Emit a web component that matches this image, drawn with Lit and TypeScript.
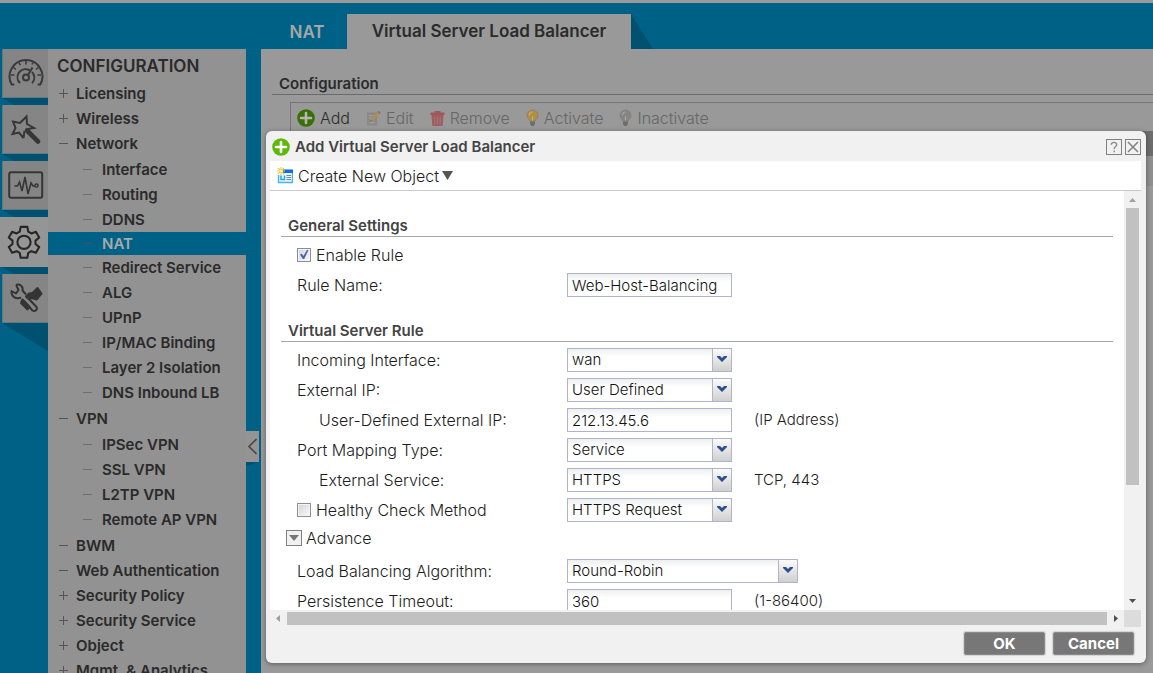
import { LitElement, html, css, svg, nothing, type TemplateResult } from "lit";
import { customElement, property, state } from "lit/decorators.js";
import { classMap } from "lit/directives/class-map.js";

interface NavItem {
  label: string;
  mark: "+" | "-";
  children?: string[];
}

const NAV: NavItem[] = [
  { label: "Licensing", mark: "+" },
  { label: "Wireless", mark: "+" },
  {
    label: "Network",
    mark: "-",
    children: [
      "Interface",
      "Routing",
      "DDNS",
      "NAT",
      "Redirect Service",
      "ALG",
      "UPnP",
      "IP/MAC Binding",
      "Layer 2 Isolation",
      "DNS Inbound LB",
    ],
  },
  { label: "VPN", mark: "-", children: ["IPSec VPN", "SSL VPN", "L2TP VPN", "Remote AP VPN"] },
  { label: "BWM", mark: "-" },
  { label: "Web Authentication", mark: "-" },
  { label: "Security Policy", mark: "+" },
  { label: "Security Service", mark: "+" },
  { label: "Object", mark: "+" },
  { label: "Mgmt. & Analytics", mark: "+" },
];

const addIcon = (size: number, fill: string, stroke: string) => svg`
  <svg width=${size} height=${size} viewBox="0 0 18 18" aria-hidden="true">
    <circle cx="9" cy="9" r="8.8" fill=${fill} />
    <path d="M9 4v10M4 9h10" stroke=${stroke} stroke-width="2.6" stroke-linecap="round" />
  </svg>`;

const editIcon = svg`
  <svg width="15" height="17" viewBox="0 0 16 17" aria-hidden="true">
    <path d="M1 2h11v14H1z" fill="#898989" />
    <path d="M3 5.500h5M3 8h3M3 13h7" stroke="#a4a4a4" />
    <path d="M4.500 11.500l.8-3 7-7 2.400 2.200-7.200 7z" fill="#ae8f50" />
    <path d="M12.300 1.500l1.200-1 2.200 2-1 1.200z" fill="#9a6266" />
    <path d="M4.500 11.500l.5-1.800 1.300 1.200z" fill="#6a5a40" />
  </svg>`;

const trashIcon = svg`
  <svg width="15" height="17" viewBox="0 0 15 17" aria-hidden="true">
    <path d="M.500 2.500h4V1h6v1.500h4V5H.500z" fill="#a0585c" />
    <path d="M1.500 5h12l-.8 11H2.300z" fill="#9f5d61" />
    <path d="M4.800 6.500v8M7.500 6.500v8M10.200 6.500v8" stroke="#ad7477" stroke-width="1" />
  </svg>`;

const bulbIcon = (fill: string, shine: string) => svg`
  <svg width="13" height="18" viewBox="0 0 13 17" aria-hidden="true">
    <path d="M6.500.5a5.500 5.500 0 0 1 5.500 5.500c0 2.500-2.300 3.500-2.800 5.500H3.800C3.300 9.500 1 8.500 1 6A5.500 5.500 0 0 1 6.500.500z" fill=${fill} stroke="#80776a" stroke-width=".6" />
    <path d="M3.500 5.500a3 3 0 0 1 3-3M6.500 7v4" stroke=${shine} fill="none" stroke-width="1.200" />
    <path d="M4 12h5v2.500l-1.200 2H5.200L4 14.500z" fill="#6d6d6d" />
  </svg>`;

const objectIcon = svg`
  <svg width="16" height="17" viewBox="0 0 16 17" aria-hidden="true">
    <path d="M6 2h9.500v13.500H1V8h5z" fill="#e8f4ff" />
    <path d="M6 2.500h10V6H6z" fill="#0f6fe0" />
    <path d="M1.500 8v7.500h14V6" fill="none" stroke="#45b4ec" stroke-width="1.400" />
    <path d="M4 8.500v4h3.500v-4" fill="none" stroke="#2ba2e6" stroke-width="1.500" />
    <path d="M9.500 8.500h4.500M9.500 10.500h4.500M9.500 12.500h4.500" stroke="#6f87a8" />
    <path d="M4 0v8M0 4h8M1 1l6 6M7 1L1 7" stroke="#f4c63d" stroke-width="1.100" />
    <circle cx="4" cy="4" r="1.600" fill="#fff3b0" />
  </svg>`;

const gaugeIcon = svg`
  <svg width="36" height="30" viewBox="0 0 36 30" fill="none" stroke="#3a3a3a" stroke-width="2" aria-hidden="true">
    <path d="M5.500 26.500H3.700A16.400 16.400 0 1 1 32.300 26.500H30.500" stroke-linecap="round" />
    <path d="M11.500 24.500a8 8 0 0 1 9.500-12.500M24.500 14.500a8 8 0 0 1 0 10" stroke-linecap="round" />
    <circle cx="18" cy="19.500" r="3" />
    <path d="M20 17l4.500-7.500" />
    <path d="M18 3v3.500M11 4.500l1.300 2.800M25 4.500l-1 2M5.500 9.500l2.500 2M30.500 9.500l-2.500 2M3 17h3.500M33 17h-3.500" stroke-width="1.500" />
  </svg>`;

const wandIcon = svg`
  <svg width="32" height="32" viewBox="0 0 32 32" fill="none" stroke="#363636" stroke-width="2" aria-hidden="true">
    <path d="M13.500 25l-4.500-5.500-6.500 1.500 3-6L3 8.500l7 1.500 6.500-6.500.5 7.500 7 4-6 1M13.500 25l1-7" stroke-linejoin="miter" />
    <path d="M17 17.500L28 28.500" stroke-width="4.600" stroke-linecap="round" />
  </svg>`;

const monitorIcon = svg`
  <svg width="36" height="28" viewBox="0 0 36 28" fill="none" stroke="#363636" aria-hidden="true">
    <rect x="1.200" y="1.200" width="33" height="25.500" rx="2" stroke-width="2" />
    <path d="M6.500 15h3l2-4 2.500 9L17 6l3 17 3-11 2 3h2" stroke-width="1.600" />
    <circle cx="28.500" cy="14.500" r="1.600" stroke-width="1.500" />
  </svg>`;

const gearIcon = svg`
  <svg width="34" height="34" viewBox="0 0 36 36" fill="none" stroke="#262626" stroke-width="2.200" stroke-linejoin="round" aria-hidden="true">
    <path d="M14.500 2h7l1 5 3.300 1.900 4.800-1.700 3.500 6-3.900 3.300v3.600l3.900 3.300-3.500 6-4.800-1.700-3.300 1.900-1 5h-7l-1-5-3.300-1.900-4.800 1.700-3.500-6 3.900-3.300v-3.600L1.900 13.200l3.500-6 4.800 1.700L13.500 7z" />
    <circle cx="18" cy="18.300" r="7" />
  </svg>`;

const toolsIcon = svg`
  <svg width="34" height="32" viewBox="0 0 34 32" fill="none" stroke="#343434" stroke-width="2" stroke-linejoin="round" aria-hidden="true">
    <path d="M7 3c4-1.500 7.500 1.500 6.500 5.500l3.500 4M12 15.500c-5 2-10-1-9.500-6.500l4.500 2.500 2.500-3.500L7 3" />
    <path d="M19 16l8.500 9c1.500 2.500-1.500 5-4 3.500L15 19" />
    <path d="M20 11.500l3.500-.5 5-5 4 5.500-5 6-4.500-1.500-4 .5-2-2z" fill="#343434" />
    <path d="M13.500 17.500l7 7.500-2 2.500-6.500-6.500z" fill="#343434" />
  </svg>`;

/** Expand marker in front of a navigation entry. */
const marker = (kind: "+" | "-") => svg`
  <svg class="mark" width="11" height="11" viewBox="0 0 11 11" aria-hidden="true">
    <path d=${kind === "+" ? "M1 5.500h9M5.500 1v9" : "M1 5.500h9"} stroke="currentColor" fill="none" />
  </svg>`;

/** Drop-down with the blue chevron button. */
@customElement("combo-box")
export class ComboBox extends LitElement {
  @property() value = "";
  @property() label = "";
  @property({ type: Array }) options: string[] = [];

  static styles = css`
    :host {
      display: block;
      position: relative;
      font-size: 15px;
    }
    select {
      display: block;
      width: 100%;
      height: 24px;
      box-sizing: border-box;
      margin: 0;
      padding: 0 20px 0 4px;
      border: 1px solid #b0b3ca;
      border-radius: 0;
      appearance: none;
      background: linear-gradient(#eceff0, #ffffff 8px);
      color: #111;
      font: inherit;
      outline: none;
    }
    .trigger {
      position: absolute;
      top: 0;
      right: 0;
      width: 20px;
      height: 24px;
      box-sizing: border-box;
      border: 1px solid #b0b3ca;
      border-top-right-radius: 2px;
      background: linear-gradient(#fbfbfb, #cfcfcf);
      display: grid;
      place-items: center;
      pointer-events: none;
    }
  `;

  render() {
    return html`
      <select aria-label=${this.label}>
        ${this.options.map((o) => html`<option ?selected=${o === this.value}>${o}</option>`)}
      </select>
      <span class="trigger">
        <svg width="10" height="8" viewBox="0 0 10 8" aria-hidden="true">
          <path d="M0 0h3l2 2 2-2h3v1L5 6 0 1z" fill="#2c4f92" />
        </svg>
      </span>
    `;
  }
}

@customElement("nav-tree")
export class NavTree extends LitElement {
  @state() private current = "NAT";

  static styles = css`
    :host {
      display: block;
      color: #2a2a2a;
      font-size: 15px;
      font-weight: 600;
    }
    h1 {
      margin: 0;
      padding: 3px 0 0 9px;
      font-size: 17px;
      line-height: 28px;
      font-weight: 600;
    }
    ul {
      margin: 0;
      padding: 0;
      list-style: none;
    }
    .tree {
      padding-top: 1px;
    }
    .sub {
      padding: 1px 0;
    }
    a {
      display: flex;
      align-items: center;
      gap: 7px;
      height: 25px;
      padding-left: 10px;
      color: inherit;
      text-decoration: none;
      white-space: nowrap;
    }
    .sub a {
      padding-left: 34px;
      gap: 9px;
    }
    .mark {
      flex: none;
      color: #555;
    }
    .sub .mark {
      color: #6e6e6e;
    }
    a.current {
      height: 23px;
      background: #006187;
      color: #a9a9a9;
    }
    a.current .mark {
      color: #30596a;
    }
  `;

  render() {
    return html`
      <h1>CONFIGURATION</h1>
      <ul class="tree">
        ${NAV.map(
          (item) => html`<li>
            <a href="#">${marker(item.mark)}${item.label}</a>
            ${item.children
              ? html`<ul class="sub">
                  ${item.children.map(
                    (c) => html`<li>
                      <a
                        href="#"
                        class=${classMap({ current: c === this.current })}
                        @click=${() => (this.current = c)}
                        >${marker("-")}${c}</a
                      >
                    </li>`
                  )}
                </ul>`
              : nothing}
          </li>`
        )}
      </ul>
    `;
  }
}

@customElement("server-dialog")
export class ServerDialog extends LitElement {
  @state() private enabled = true;
  @state() private healthCheck = false;

  static styles = css`
    :host {
      display: flex;
      flex-direction: column;
      box-sizing: border-box;
      padding: 0 5px 0 4px;
      border-radius: 6px;
      background: #f1f1f1;
      box-shadow: 0 1px 5px rgba(0, 0, 0, 0.4);
      color: #1c1c1c;
    }
    header {
      display: flex;
      align-items: center;
      gap: 5px;
      box-sizing: border-box;
      height: 30px;
      padding: 2px 0 0 2px;
    }
    h2 {
      flex: 1;
      margin: 0;
      font-size: 15px;
      font-weight: 600;
      color: #444;
    }
    .tools {
      display: flex;
      gap: 3px;
    }
    .tool,
    .fold {
      display: grid;
      place-items: center;
      width: 16px;
      height: 16px;
      padding: 0;
      border: 1px solid #808080;
      background: #f1f1f1;
    }
    .bar {
      display: flex;
      align-items: center;
      height: 29px;
      padding-left: 7px;
      background: #fff;
      border-bottom: 1px solid #c8c8c8;
    }
    .create {
      display: flex;
      align-items: center;
      gap: 5px;
      padding: 0;
      border: 0;
      background: none;
      color: inherit;
      font: inherit;
    }
    .create span {
      display: flex;
      align-items: center;
      gap: 3px;
    }
    .view {
      flex: 1;
      min-height: 0;
      display: grid;
      grid-template: minmax(0, 1fr) 17px / minmax(0, 1fr) 17px;
    }
    form {
      overflow: hidden;
      background: #fff;
      padding: 24px 11px 0;
    }
    h3 {
      margin: 0;
      padding-left: 7px;
      border-bottom: 1px solid #a6a6a6;
      font-size: 15px;
      line-height: 21px;
      font-weight: 600;
      color: #444;
    }
    .group {
      display: flex;
      flex-direction: column;
      padding: 3px 0 0 16px;
    }
    .first {
      margin-bottom: 20px;
    }
    .row {
      display: grid;
      grid-template-columns: 270px 165px auto;
      align-items: center;
      height: 30px;
      white-space: nowrap;
    }
    .wide {
      grid-template-columns: 270px 231px auto;
    }
    .nested {
      padding-left: 22px;
    }
    .note {
      padding-left: 22px;
      font-size: 15px;
    }
    .check {
      display: flex;
      align-items: center;
      gap: 5px;
    }
    .check input {
      appearance: none;
      display: grid;
      place-items: center;
      flex: none;
      width: 14px;
      height: 14px;
      margin: 0;
      border: 1px solid #8c8f92;
      background: linear-gradient(135deg, #d0d3d8, #fafafa);
      box-shadow: inset 0 0 0 1px #f4f4f4;
    }
    .box {
      position: relative;
      display: flex;
    }
    .tick {
      position: absolute;
      left: 2px;
      top: 1px;
      pointer-events: none;
    }
    .text {
      height: 24px;
      width: 100%;
      box-sizing: border-box;
      padding: 0 4px;
      border: 1px solid #b0b3ca;
      border-radius: 0;
      background: linear-gradient(#eceff0, #ffffff 8px);
      color: #111;
      font: inherit;
      font-size: 15px;
      outline: none;
    }
    .advance {
      display: flex;
      align-items: center;
      gap: 4px;
      height: 26px;
      padding-left: 5px;
    }
    .last {
      padding-top: 5px;
    }
    .vbar,
    .hbar {
      display: flex;
      align-items: center;
      background: #f1f1f1;
    }
    .vbar {
      flex-direction: column;
    }
    .arrow {
      flex: none;
      width: 17px;
      height: 17px;
    }
    .vthumb {
      flex: 277;
      width: 13px;
      background: #c1c1c1;
    }
    .vrest {
      flex: 108;
    }
    .hthumb {
      flex: 1;
      height: 13px;
      background: #c1c1c1;
    }
    .corner {
      background: #dcdcdc;
    }
    footer {
      display: flex;
      justify-content: flex-end;
      align-items: flex-start;
      gap: 8px;
      height: 31px;
      padding: 5px 7px 0 0;
    }
    .action {
      width: 81px;
      height: 23px;
      padding: 0;
      border: 1px solid #8a8a8a;
      border-radius: 2px;
      background: #777;
      color: #fff;
      font: inherit;
      font-size: 15px;
      font-weight: 700;
      box-shadow: 0 0 1px 1px #d2d2d2;
    }
  `;

  private combo(label: string, value: string, options: string[] = [value]): TemplateResult {
    return html`<combo-box .label=${label} .value=${value} .options=${options}></combo-box>`;
  }

  private check(label: string, on: boolean, change: (v: boolean) => void) {
    return html`<label class="check">
      <span class="box">
        <input
          type="checkbox"
          .checked=${on}
          @change=${(e: Event) => change((e.target as HTMLInputElement).checked)}
        />
        ${on
          ? html`<svg class="tick" width="10" height="11" viewBox="0 0 10 11" aria-hidden="true">
              <path d="M1 5.500l1.800-.8 1.600 2.300L8.200.800l1.300.2L5.200 10H3.800z" fill="#4664b0" />
            </svg>`
          : nothing}
      </span>
      ${label}
    </label>`;
  }

  render() {
    return html`
      <header>
        ${addIcon(18, "#5db906", "#fff")}
        <h2>Add Virtual Server Load Balancer</h2>
        <div class="tools">
          <button class="tool" aria-label="Help">
            <svg width="12" height="12" viewBox="0 0 12 12" fill="none" stroke="#8a8a8a" stroke-width="1.400">
              <path d="M3.300 3.800C3.300.6 8.800.6 8.700 3.700 8.600 5.500 6.200 5.600 6.200 8M6.200 9.600v1.600" />
            </svg>
          </button>
          <button class="tool" aria-label="Close">
            <svg width="12" height="12" viewBox="0 0 12 12" fill="none" stroke="#808080" stroke-width="1.500">
              <path d="M1 1l10 10M11 1L1 11" />
            </svg>
          </button>
        </div>
      </header>
      <div class="bar">
        <button class="create">
          ${objectIcon}
          <span>
            Create New Object
            <svg width="11" height="9" viewBox="0 0 11 9" aria-hidden="true">
              <path d="M0 0h11L5.500 9z" fill="#555" />
            </svg>
          </span>
        </button>
      </div>
      <div class="view">
        <form>
          <h3>General Settings</h3>
          <div class="group first">
            <div class="row">${this.check("Enable Rule", this.enabled, (v) => (this.enabled = v))}</div>
            <div class="row">
              <label for="name">Rule Name:</label>
              <input class="text" id="name" type="text" .value=${"Web-Host-Balancing"} />
            </div>
          </div>
          <h3>Virtual Server Rule</h3>
          <div class="group">
            <div class="row">
              <span>Incoming Interface:</span>${this.combo("Incoming Interface", "wan")}
            </div>
            <div class="row">
              <span>External IP:</span>${this.combo("External IP", "User Defined")}
            </div>
            <div class="row">
              <label class="nested" for="ip">User-Defined External IP:</label>
              <input class="text" id="ip" type="text" .value=${"212.13.45.6"} />
              <span class="note">(IP Address)</span>
            </div>
            <div class="row">
              <span>Port Mapping Type:</span>${this.combo("Port Mapping Type", "Service")}
            </div>
            <div class="row">
              <span class="nested">External Service:</span>${this.combo("External Service", "HTTPS")}
              <span class="note">TCP, 443</span>
            </div>
            <div class="row">
              ${this.check("Healthy Check Method", this.healthCheck, (v) => (this.healthCheck = v))}
              ${this.combo("Healthy Check Method", "HTTPS Request")}
            </div>
          </div>
          <div class="advance">
            <button class="fold" type="button" aria-label="Toggle advanced settings">
              <svg width="10" height="6" viewBox="0 0 10 6" aria-hidden="true">
                <path d="M0 0h10L5 6z" fill="#777" />
              </svg>
            </button>
            Advance
          </div>
          <div class="group last">
            <div class="row wide">
              <span>Load Balancing Algorithm:</span>${this.combo("Load Balancing Algorithm", "Round-Robin")}
            </div>
            <div class="row">
              <label for="timeout">Persistence Timeout:</label>
              <input class="text" id="timeout" type="text" .value=${"360"} />
              <span class="note">(1-86400)</span>
            </div>
          </div>
        </form>
        <div class="vbar">
          <svg class="arrow" viewBox="0 0 17 17"><path d="M5 11h7L8.500 7z" fill="#a0a0a0" /></svg>
          <div class="vthumb"></div>
          <div class="vrest"></div>
          <svg class="arrow" viewBox="0 0 17 17"><path d="M5 6h7l-3.500 4z" fill="#505050" /></svg>
        </div>
        <div class="hbar">
          <svg class="arrow" viewBox="0 0 17 17"><path d="M10 5v7L6 8.500z" fill="#a0a0a0" /></svg>
          <div class="hthumb"></div>
          <svg class="arrow" viewBox="0 0 17 17"><path d="M7 5v7l4-3.500z" fill="#505050" /></svg>
        </div>
        <div class="corner"></div>
      </div>
      <footer>
        <button class="action">OK</button>
        <button class="action">Cancel</button>
      </footer>
    `;
  }
}

@customElement("app-root")
export class AppRoot extends LitElement {
  static styles = css`
    :host {
      display: flex;
      flex-direction: column;
      position: relative;
      height: 100vh;
      overflow: hidden;
      box-sizing: border-box;
      border-top: 3px solid #999;
      background: #006187;
      color: #2b2b2b;
      font: 300 16px/20px "Century Gothic", Inter, sans-serif;
    }
    .tabs {
      display: flex;
      align-items: flex-end;
      flex: none;
      height: 46px;
      padding-left: 267px;
      font-size: 17px;
      font-weight: 600;
    }
    .tab {
      display: grid;
      place-items: center;
      box-sizing: border-box;
      height: 35px;
      width: 80px;
      color: #a6a6a6;
      text-decoration: none;
    }
    .tab.active {
      width: 284px;
      padding-bottom: 2px;
      background: #999;
      color: #2b2b2b;
    }
    .cols {
      flex: 1;
      min-height: 0;
      display: flex;
    }
    .rail {
      flex: none;
      width: 48px;
    }
    .module {
      display: grid;
      place-items: center;
      box-sizing: border-box;
      height: 49px;
      margin-left: 2px;
      border: solid #5d7a88;
      border-width: 0 0 1px 1px;
      background: #858585;
    }
    .module.active {
      height: 50px;
      margin-left: 0;
      border: 0;
      background: #959595;
    }
    .shade {
      display: block;
      height: 7px;
      margin-left: 2px;
      background: #005170;
      clip-path: polygon(0 0, 100% 0, 100% 100%, 12px 100%);
    }
    .shade.long {
      height: 28px;
      clip-path: polygon(0 0, 100% 0, 100% 100%);
    }
    nav-tree {
      flex: none;
      width: 198px;
      background: #929292;
    }
    .gutter {
      flex: none;
      width: 15px;
      padding-top: 382px;
    }
    .collapse {
      display: grid;
      place-items: center;
      width: 13px;
      height: 31px;
      padding: 0;
      border: 0;
      background: #949494;
    }
    .under {
      width: 13px;
      height: 4px;
      background: #005170;
      clip-path: polygon(0 0, 100% 0, 0 100%);
    }
    main {
      flex: 1;
      min-width: 0;
      padding: 24px 0 0 11px;
      background: #999;
    }
    h2 {
      margin: 0 0 7px;
      padding-left: 7px;
      border-bottom: 1px solid #6b6b6b;
      font-size: 15px;
      line-height: 21px;
      font-weight: 600;
    }
    .panel {
      margin-left: 18px;
      border: solid #757575;
      border-width: 1px 0 0 1px;
    }
    .actions {
      display: flex;
      box-sizing: border-box;
      height: 28px;
      gap: 16px;
      padding: 2px 0 0 6px;
    }
    .actions button {
      display: flex;
      align-items: center;
      gap: 5px;
      padding: 0;
      border: 0;
      background: none;
      color: #2b2b2b;
      font: inherit;
    }
    .actions button:disabled {
      color: #666;
    }
    .head {
      height: 25px;
      background: #6c6c6c;
    }
    .line {
      height: 30px;
      background: #8f8f8f;
    }
    server-dialog {
      position: absolute;
      inset: 128px 7px 10px 266px;
    }
  `;

  render() {
    return html`
      <nav class="tabs">
        <a class="tab" href="#">NAT</a>
        <a class="tab active" href="#">Virtual Server Load Balancer</a>
        <svg width="22" height="35" viewBox="0 0 22 35" aria-hidden="true">
          <path d="M0 0l22 35H0z" fill="#005170" />
        </svg>
      </nav>
      <div class="cols">
        <nav class="rail">
          <a class="module" href="#" aria-label="Dashboard">${gaugeIcon}</a><span class="shade"></span>
          <a class="module" href="#" aria-label="Quick Setup">${wandIcon}</a><span class="shade"></span>
          <a class="module" href="#" aria-label="Monitor">${monitorIcon}</a><span class="shade"></span>
          <a class="module active" href="#" aria-label="Configuration">${gearIcon}</a><span class="shade"></span>
          <a class="module" href="#" aria-label="Maintenance">${toolsIcon}</a><span class="shade long"></span>
        </nav>
        <nav-tree></nav-tree>
        <div class="gutter">
          <button class="collapse" aria-label="Collapse menu">
            <svg width="9" height="17" viewBox="0 0 9 17" fill="none" stroke="#4a4a4a" stroke-width="1.600">
              <path d="M8.500 1l-7.500 7.500L8.500 16" />
            </svg>
          </button>
          <div class="under"></div>
        </div>
        <main>
          <h2>Configuration</h2>
          <div class="panel">
            <div class="actions">
              <button>${addIcon(18, "#387004", "#b5b5b5")} Add</button>
              <button disabled>${editIcon} Edit</button>
              <button disabled>${trashIcon} Remove</button>
              <button disabled>${bulbIcon("#b08f43", "#c8b078")} Activate</button>
              <button disabled>${bulbIcon("#858585", "#a8a8a8")} Inactivate</button>
            </div>
            <div class="head"></div>
            <div class="line"></div>
          </div>
        </main>
      </div>
      <server-dialog></server-dialog>
    `;
  }
}
